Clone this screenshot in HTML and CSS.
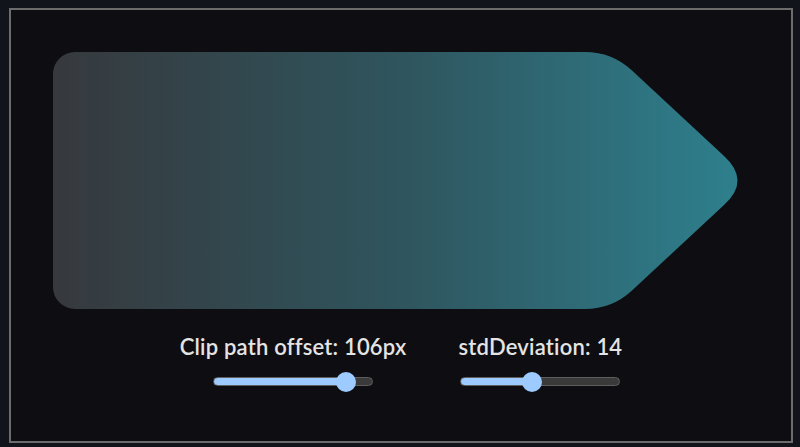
FILE: index.html
```html
<!DOCTYPE html>
<html lang="en">
<head>
  <meta charset="UTF-8">
  <title>Clip path blur</title>
  <link rel="stylesheet" href="styles.css">
</head>
<body>

  <div class="frame">
    <svg class="shape" width="780" height="312" viewBox="11 10 780 312">
      <defs>
        <linearGradient id="fade" gradientUnits="userSpaceOnUse" x1="53" y1="0" x2="751" y2="0">
          <stop offset="0" stop-color="#36393d"/>
          <stop offset="0.5" stop-color="#2f555e"/>
          <stop offset="1" stop-color="#2e818f"/>
        </linearGradient>
      </defs>
      <!-- clipped polygon, corners softened like the blur does -->
      <path fill="url(#fade)" d="M75 52 L585 52 Q612 52 632 70.5 L724 156 Q751 180.5 724 205 L632 290.5 Q612 309 585 309 L75 309 A22 22 0 0 1 53 287 L53 74 A22 22 0 0 1 75 52 Z"/>
    </svg>

    <div class="controls">
      <div class="control">
        <label for="offset">Clip path offset: 106px</label>
        <input class="slider" id="offset" type="range" min="0" max="120" value="106" style="--fill: 83%">
      </div>
      <div class="control">
        <label for="deviation">stdDeviation: 14</label>
        <input class="slider" id="deviation" type="range" min="0" max="32" value="14" style="--fill: 45%">
      </div>
    </div>
  </div>

</body>
</html>
```

FILE: styles.css
```css
body {
  margin: 0;
  background-color: #12141b;
  font-family: Lato, "Open Sans", sans-serif;
}

.frame {
  box-sizing: border-box;
  width: 784px;
  height: 435px;
  margin: 8px 0 0 9px;
  border: 2px solid #6c6c6c;
  background-color: #0e0e12;
  display: flex;
  flex-direction: column;
}

.shape {
  display: block;
}

.controls {
  display: flex;
  justify-content: center;
  gap: 52px;
  padding-top: 12px;
}

.control {
  display: flex;
  flex-direction: column;
  align-items: center;
  gap: 17px;
}

.control label {
  color: #e4e4e4;
  font-size: 22px;
  font-weight: 600;
  line-height: 26px;
  letter-spacing: 0.2px;
}

.slider {
  -webkit-appearance: none;
  appearance: none;
  box-sizing: border-box;
  width: 160px;
  height: 9px;
  margin: 0;
  border: 1px solid #5e5e5e;
  border-radius: 5px;
  background: linear-gradient(to right, #9dcbff var(--fill), #3a3a3a var(--fill));
}

.slider::-webkit-slider-thumb {
  -webkit-appearance: none;
  appearance: none;
  width: 20px;
  height: 20px;
  border: none;
  border-radius: 50%;
  background-color: #9dcbff;
}
```
